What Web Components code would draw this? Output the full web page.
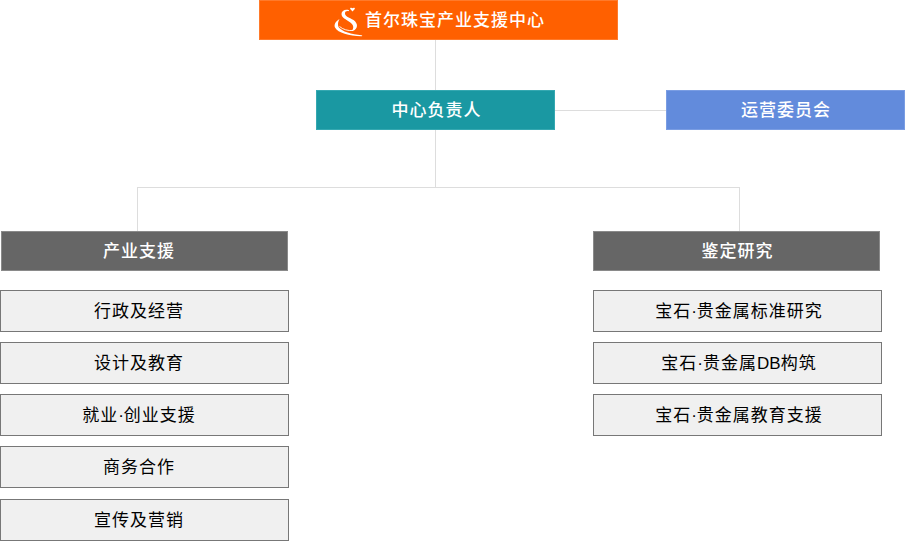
<!DOCTYPE html>
<html lang="zh">
<head>
<meta charset="utf-8">
<title>首尔珠宝产业支援中心</title>
<style>
  body { margin: 0; background: #fff; }
  .tight { letter-spacing: 0; }
</style>
</head>
<body>
<org-chart>
  <org-node slot="root" variant="root"><org-logo></org-logo>首尔珠宝产业支援中心</org-node>
  <org-node slot="lead" variant="lead">中心负责人</org-node>
  <org-node slot="side" variant="side">运营委员会</org-node>
  <org-column slot="left" label="产业支援" inset>
    <org-node class="l">行政及经营</org-node>
    <org-node class="l">设计及教育</org-node>
    <org-node class="l"><span>就业<span class="tight">·</span>创业支援</span></org-node>
    <org-node class="l">商务合作</org-node>
    <org-node class="l last">宣传及营销</org-node>
  </org-column>
  <org-column slot="right" label="鉴定研究">
    <org-node class="r"><span>宝石<span class="tight">·</span>贵金属标准研究</span></org-node>
    <org-node class="r"><span>宝石<span class="tight">·</span>贵金属<span class="tight">DB</span>构筑</span></org-node>
    <org-node class="r"><span>宝石<span class="tight">·</span>贵金属教育支援</span></org-node>
  </org-column>
</org-chart>

<script>
class OrgLogo extends HTMLElement {
  constructor() {
    super();
    this.attachShadow({ mode: 'open' });
    this.shadowRoot.innerHTML = `
      <style>
        :host { display: block; width: 30px; height: 34px; margin-right: 2px; }
        svg { display: block; }
      </style>
      <svg width="30" height="34" viewBox="0 0 30 34" fill="#fff" stroke="none">
        <path d="M16 7.2C12 6 8.5 7.8 8.5 11C8.5 14.5 13 16.5 17 19.2C20.5 21.5 21.5 25 18.5 28C23.5 27.5 26 22.5 22 18.2C18.5 15 12 14 12 10.5C12 8.5 13.5 7.8 16 8.2Z"/>
        <path d="M19.5 8.5L17.2 6C16.7 4.8 18.6 4.2 19.5 5.3C20.4 4.2 22.3 4.8 21.8 6Z"/>
        <path d="M6.5 16C2.5 18.5 .8 21.5 2 24.5C5 30 16 33 28.5 33.2C29.5 33.2 29.5 32.4 28.5 32.2C19 31.5 8.5 28.5 5.5 24C4.5 21.5 5 18.5 6.5 16Z"/>
        <path d="M6.5 23.5C10 26.5 15 28 20 27.5" fill="none" stroke="#fff" stroke-width=".9"/>
      </svg>`;
  }
}

class OrgNode extends HTMLElement {
  constructor() {
    super();
    this.attachShadow({ mode: 'open' });
    this.shadowRoot.innerHTML = `
      <style>
        :host {
          display: flex;
          align-items: center;
          justify-content: center;
          box-sizing: border-box;
          height: 42px;
          border: 1px solid #777;
          background: #f0f0f0;
          color: #000;
          font: 400 17px/1 "Liberation Sans", "Noto Sans CJK SC", sans-serif;
          letter-spacing: 1px;
          white-space: nowrap;
        }
        :host(.last) { margin-top: 1px; }
        :host(.l) { padding-right: 11px; }
        :host(.r) { padding-left: 3px; }
        :host([variant="root"]), :host([variant="lead"]), :host([variant="side"]), :host([variant="head"]) {
          height: 40px;
          color: #fff;
          font-weight: 500;
        }
        :host([variant="root"]) { width: 359px; background: #ff6000; border-color: #ff7a2a; padding-left: 1px; }
        :host([variant="lead"]) { width: 239px; background: #1a98a2; border-color: #35a8b1; padding-left: 2px; }
        :host([variant="side"]) { width: 239px; background: #628bdc; border-color: #7a9de3; padding-left: 1px; }
        :host([variant="head"]) { width: 287px; background: #666; border-color: #8a8a8a; }
        :host([variant="head"].l) { padding-right: 11px; }
        :host([variant="head"].r) { padding-left: 2px; }
      </style>
      <slot></slot>`;
  }
}

class OrgColumn extends HTMLElement {
  constructor() {
    super();
    this.attachShadow({ mode: 'open' });
    this.shadowRoot.innerHTML = `
      <style>
        :host { display: flex; flex-direction: column; width: 289px; }
        :host([inset]) org-node { margin-left: 1px; }
        .items { display: flex; flex-direction: column; gap: 10px; margin-top: 19px; }
      </style>
      <org-node variant="head"></org-node>
      <div class="items"><slot></slot></div>`;
    const head = this.shadowRoot.querySelector('org-node');
    head.textContent = this.getAttribute('label');
    head.classList.add(this.hasAttribute('inset') ? 'l' : 'r');
  }
}

class OrgChart extends HTMLElement {
  constructor() {
    super();
    this.attachShadow({ mode: 'open' });
    this.shadowRoot.innerHTML = `
      <style>
        :host { display: block; position: relative; width: 906px; height: 541px; overflow: hidden; }
        svg { position: absolute; left: 0; top: 0; }
        .row { position: relative; display: flex; }
        .top { padding-left: 259px; }
        .mid { margin-top: 50px; padding-left: 316px; gap: 111px; }
        .cols { margin-top: 101px; gap: 304px; }
      </style>
      <svg width="906" height="541" fill="none" stroke="#ddd" stroke-width="1" shape-rendering="crispEdges">
        <path d="M435.5 40V187.5M555 110.5H666M137.5 231V187.5H739.5V231"/>
      </svg>
      <div class="row top"><slot name="root"></slot></div>
      <div class="row mid"><slot name="lead"></slot><slot name="side"></slot></div>
      <div class="row cols"><slot name="left"></slot><slot name="right"></slot></div>`;
  }
}

customElements.define('org-logo', OrgLogo);
customElements.define('org-node', OrgNode);
customElements.define('org-column', OrgColumn);
customElements.define('org-chart', OrgChart);
</script>
</body>
</html>
